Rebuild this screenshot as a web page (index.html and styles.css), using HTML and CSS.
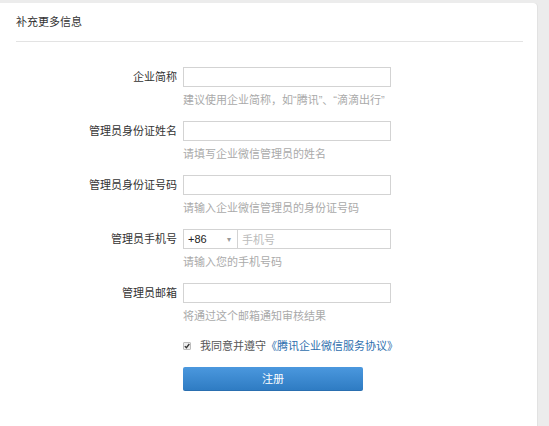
FILE: index.html
```html
<!DOCTYPE html>
<html lang="zh-CN">
<head>
<meta charset="utf-8">
<title>补充更多信息</title>
<link rel="stylesheet" href="styles.css">
</head>
<body>
<div class="page">
  <div class="card">
    <div class="card-header">补充更多信息</div>
    <form class="form">
      <div class="row">
        <label class="label">企业简称</label>
        <div class="field">
          <div class="input"></div>
          <div class="hint">建议使用企业简称，如“腾讯”、“滴滴出行”</div>
        </div>
      </div>
      <div class="row">
        <label class="label">管理员身份证姓名</label>
        <div class="field">
          <div class="input"></div>
          <div class="hint">请填写企业微信管理员的姓名</div>
        </div>
      </div>
      <div class="row">
        <label class="label">管理员身份证号码</label>
        <div class="field">
          <div class="input"></div>
          <div class="hint">请输入企业微信管理员的身份证号码</div>
        </div>
      </div>
      <div class="row">
        <label class="label">管理员手机号</label>
        <div class="field">
          <div class="input phone">
            <div class="code"><span>+86</span><span class="caret">▾</span></div>
            <div class="placeholder">手机号</div>
          </div>
          <div class="hint">请输入您的手机号码</div>
        </div>
      </div>
      <div class="row">
        <label class="label">管理员邮箱</label>
        <div class="field">
          <div class="input"></div>
          <div class="hint">将通过这个邮箱通知审核结果</div>
        </div>
      </div>
      <div class="agree">
        <span class="check"><svg width="6" height="6" viewBox="0 0 6 6"><path d="M0.8 3.1 L2.4 4.7 L5.3 1" fill="none" stroke="#333" stroke-width="1.3"/></svg></span>
        <span class="agree-text">我同意并遵守<a class="link">《腾讯企业微信服务协议》</a></span>
      </div>
      <div class="submit-row">
        <div class="btn">注册</div>
      </div>
    </form>
  </div>
</div>
</body>
</html>
```
FILE: styles.css
```css
* { box-sizing: border-box; }
html, body { margin: 0; padding: 0; }
body {
  background: #ececec;
  font-family: "Liberation Sans", "Noto Sans CJK SC", sans-serif;
  font-size: 11px;
  color: #333;
  width: 549px;
  height: 426px;
  overflow: hidden;
}
.page {
  padding: 3px 12px 0 0;
}
.card {
  background: #fff;
  border-top-right-radius: 4px;
  min-height: 423px;
  padding: 0 14px 0 16px;
  box-shadow: 1px 0 0 #e2e2e2;
}
.card-header {
  padding: 11px 0 10px 0;
  line-height: 17px;
  border-bottom: 1px solid #e3e3e3;
  color: #333;
}
.form {
  padding-top: 25px;
}
.row {
  display: grid;
  grid-template-columns: 161px 208px;
  column-gap: 6px;
  margin-bottom: 14px;
}
.label {
  text-align: right;
  line-height: 20px;
  color: #333;
}
.input {
  height: 20px;
  border: 1px solid #d3d3d3;
  background: #fff;
}
.hint {
  margin-top: 6px;
  line-height: 14px;
  color: #aaa;
}
.phone {
  display: flex;
  align-items: center;
}
.code {
  width: 54px;
  height: 100%;
  border-right: 1px solid #d3d3d3;
  display: flex;
  align-items: center;
  justify-content: space-between;
  padding: 0 6px 0 4px;
  color: #222;
}
.caret {
  font-size: 8px;
  color: #999;
}
.placeholder {
  padding-left: 4px;
  color: #bbb;
}
.agree {
  margin-top: 15px;
  margin-left: 183px;
  margin-left: 167px;
  display: flex;
  align-items: center;
  line-height: 16px;
}
.check {
  width: 8px;
  height: 8px;
  border: 1px solid #bdbdbd;
  background: #eee;
  border-radius: 1px;
  display: flex;
  align-items: center;
  justify-content: center;
  margin-right: 9px;
}
.agree-text {
  color: #555;
}
.link {
  color: #2f6fae;
}
.submit-row {
  margin-top: 13px;
  padding-left: 167px;
}
.btn {
  width: 180px;
  height: 24px;
  line-height: 24px;
  text-align: center;
  color: #fff;
  border-radius: 2px;
  background: linear-gradient(#4b98de, #2f7cc3);
  border-bottom: 1px solid #2a6fb0;
}
```
